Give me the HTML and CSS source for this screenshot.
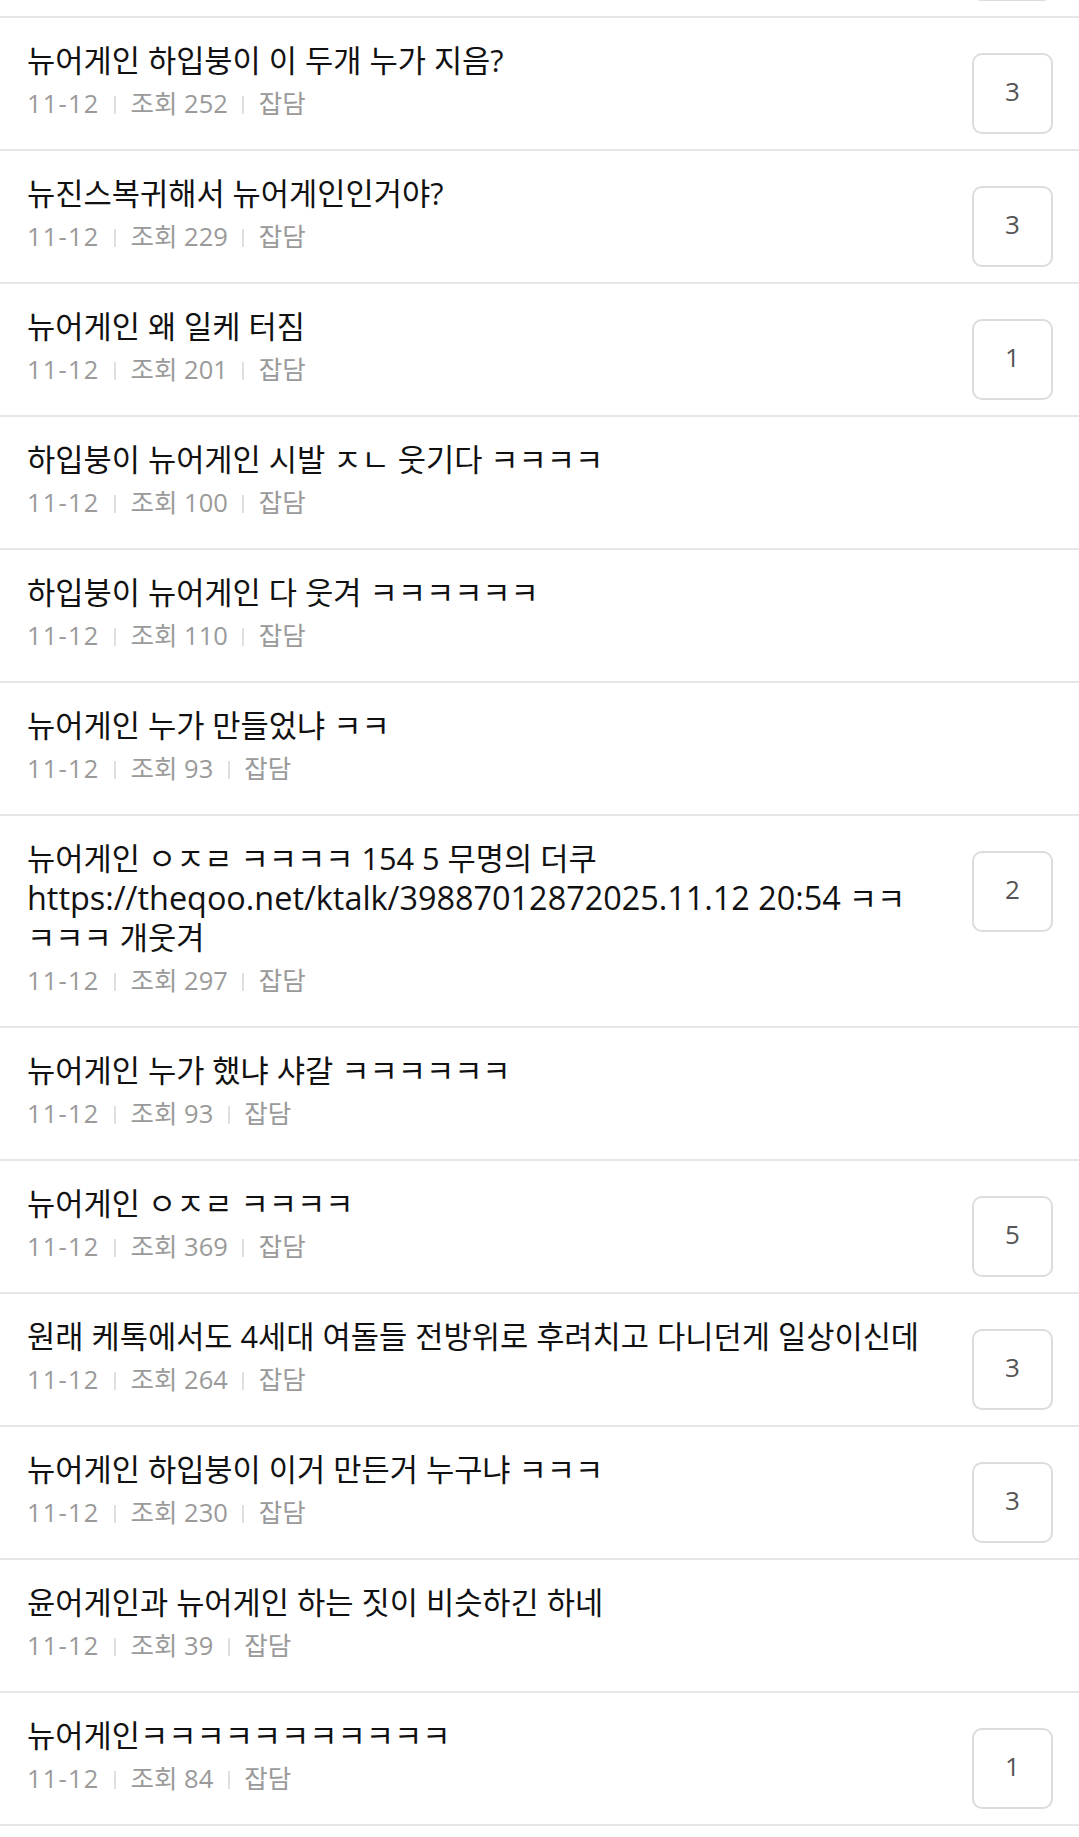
FILE: index.html
```html
<!DOCTYPE html>
<html lang="ko">
<head>
    <meta charset="UTF-8">
    <meta name="viewport" content="width=device-width, initial-scale=1.0">
    <title>뉴어게인 - 검색</title>
    <link rel="stylesheet" href="styles.css">
</head>
<body>
    <ul class="post-list">
        <!-- scrolled past: only the bottom of its badge is still in view -->
        <li class="post">
            <div class="post-body"></div>
            <span class="count">3</span>
        </li>
        <li class="post">
            <div class="post-body">
                <p class="title">뉴어게인 하입붕이 이 두개 누가 지음?</p>
                <div class="meta"><span class="date">11-12</span><i class="sep"></i><span>조회 252</span><i class="sep"></i><span>잡담</span></div>
            </div>
            <span class="count">3</span>
        </li>
        <li class="post">
            <div class="post-body">
                <p class="title">뉴진스복귀해서 뉴어게인인거야?</p>
                <div class="meta"><span class="date">11-12</span><i class="sep"></i><span>조회 229</span><i class="sep"></i><span>잡담</span></div>
            </div>
            <span class="count">3</span>
        </li>
        <li class="post">
            <div class="post-body">
                <p class="title">뉴어게인 왜 일케 터짐</p>
                <div class="meta"><span class="date">11-12</span><i class="sep"></i><span>조회 201</span><i class="sep"></i><span>잡담</span></div>
            </div>
            <span class="count">1</span>
        </li>
        <li class="post">
            <div class="post-body">
                <p class="title">하입붕이 뉴어게인 시발 ㅈㄴ 웃기다 ㅋㅋㅋㅋ</p>
                <div class="meta"><span class="date">11-12</span><i class="sep"></i><span>조회 100</span><i class="sep"></i><span>잡담</span></div>
            </div>
        </li>
        <li class="post">
            <div class="post-body">
                <p class="title">하입붕이 뉴어게인 다 웃겨 ㅋㅋㅋㅋㅋㅋ</p>
                <div class="meta"><span class="date">11-12</span><i class="sep"></i><span>조회 110</span><i class="sep"></i><span>잡담</span></div>
            </div>
        </li>
        <li class="post">
            <div class="post-body">
                <p class="title">뉴어게인 누가 만들었냐 ㅋㅋ</p>
                <div class="meta"><span class="date">11-12</span><i class="sep"></i><span>조회 93</span><i class="sep"></i><span>잡담</span></div>
            </div>
        </li>
        <li class="post">
            <div class="post-body">
                <p class="title">뉴어게인 ㅇㅈㄹ ㅋㅋㅋㅋ 154 5 무명의 더쿠 <span class="url">https://theqoo.net/ktalk/39887012872025.11.12 20:54</span> ㅋㅋㅋㅋㅋ 개웃겨</p>
                <div class="meta"><span class="date">11-12</span><i class="sep"></i><span>조회 297</span><i class="sep"></i><span>잡담</span></div>
            </div>
            <span class="count">2</span>
        </li>
        <li class="post">
            <div class="post-body">
                <p class="title">뉴어게인 누가 했냐 샤갈 ㅋㅋㅋㅋㅋㅋ</p>
                <div class="meta"><span class="date">11-12</span><i class="sep"></i><span>조회 93</span><i class="sep"></i><span>잡담</span></div>
            </div>
        </li>
        <li class="post">
            <div class="post-body">
                <p class="title">뉴어게인 ㅇㅈㄹ ㅋㅋㅋㅋ</p>
                <div class="meta"><span class="date">11-12</span><i class="sep"></i><span>조회 369</span><i class="sep"></i><span>잡담</span></div>
            </div>
            <span class="count">5</span>
        </li>
        <li class="post">
            <div class="post-body">
                <p class="title">원래 케톡에서도 4세대 여돌들 전방위로 후려치고 다니던게 일상이신데</p>
                <div class="meta"><span class="date">11-12</span><i class="sep"></i><span>조회 264</span><i class="sep"></i><span>잡담</span></div>
            </div>
            <span class="count">3</span>
        </li>
        <li class="post">
            <div class="post-body">
                <p class="title">뉴어게인 하입붕이 이거 만든거 누구냐 ㅋㅋㅋ</p>
                <div class="meta"><span class="date">11-12</span><i class="sep"></i><span>조회 230</span><i class="sep"></i><span>잡담</span></div>
            </div>
            <span class="count">3</span>
        </li>
        <li class="post">
            <div class="post-body">
                <p class="title">윤어게인과 뉴어게인 하는 짓이 비슷하긴 하네</p>
                <div class="meta"><span class="date">11-12</span><i class="sep"></i><span>조회 39</span><i class="sep"></i><span>잡담</span></div>
            </div>
        </li>
        <li class="post">
            <div class="post-body">
                <p class="title">뉴어게인ㅋㅋㅋㅋㅋㅋㅋㅋㅋㅋㅋ</p>
                <div class="meta"><span class="date">11-12</span><i class="sep"></i><span>조회 84</span><i class="sep"></i><span>잡담</span></div>
            </div>
            <span class="count">1</span>
        </li>
    </ul>
</body>
</html>
```

FILE: styles.css
```css
body {
    margin: 0;
    background-color: #fff;
    font-family: "Open Sans", "Noto Sans CJK KR", sans-serif;
}
.post-list {
    list-style: none;
    margin: -115px 0 0;
    padding: 0;
}
.post {
    display: flex;
    align-items: flex-start;
    box-sizing: border-box;
    min-height: 133px;
    padding: 23px 26px 15px 27px;
    border-bottom: 2px solid #e6e6e6;
}
.post-body {
    flex: 1;
    min-width: 0;
    margin-right: 50px;
    padding-bottom: 15px;
}
.title {
    margin: 0;
    font-size: 30.7px;
    line-height: 39px;
    color: #111;
}
.url {
    font-size: 32.4px;
}
.meta {
    display: flex;
    align-items: center;
    margin-top: 7px;
    font-size: 25.5px;
    line-height: 32px;
    color: #9a9a9a;
}
.date {
    letter-spacing: 1.2px;
}
.sep {
    width: 2px;
    height: 18px;
    margin: 4px 14.5px 0;
    background-color: #e0e0e0;
}
.count {
    display: flex;
    justify-content: center;
    align-items: center;
    flex-shrink: 0;
    box-sizing: border-box;
    width: 81px;
    height: 81px;
    margin-top: 12px;
    padding-bottom: 6px;
    border: 2px solid #dcdcdc;
    border-radius: 10px;
    font-size: 26px;
    color: #555;
}
```
